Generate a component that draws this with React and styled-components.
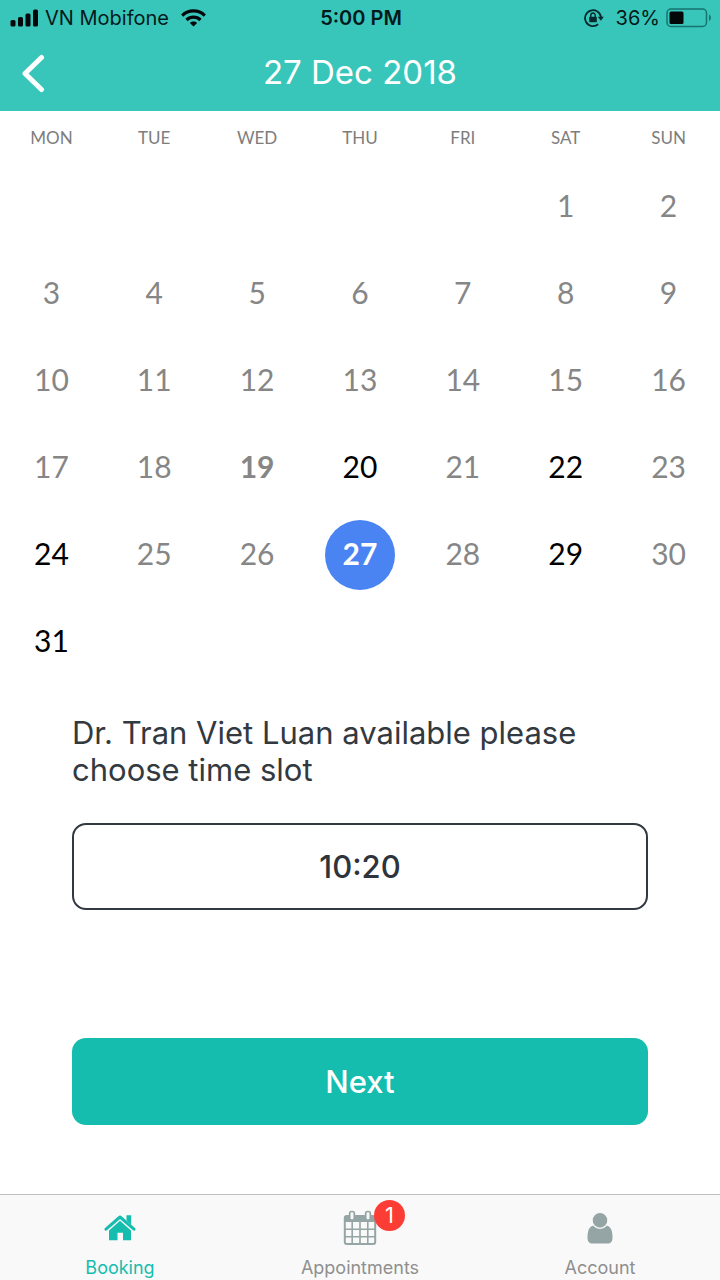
import React, { useState } from "react";
import styled, { createGlobalStyle } from "styled-components";

const GlobalStyle = createGlobalStyle`
  *, *::before, *::after { box-sizing: border-box; }
  body { margin: 0; background: #fff; font-family: Inter, "Liberation Sans", sans-serif; }
  button { font: inherit; margin: 0; padding: 0; border: 0; background: none; cursor: pointer; }
`;

const Screen = styled.div`
  display: flex;
  flex-direction: column;
  min-height: 100vh;
  background: #fff;
`;

const Header = styled.header`
  background: #38c6ba;
`;

const StatusBar = styled.div`
  display: grid;
  grid-template-columns: 1fr auto 1fr;
  align-items: center;
  height: 36px;
  padding: 0 8px 0 10px;
  color: #04191b;
  font-size: 20px;
  line-height: 24px;
`;

const StatusGroup = styled.div`
  display: flex;
  align-items: center;
  justify-content: ${(p) => (p.$end ? "flex-end" : "flex-start")};
  gap: 6px;
  white-space: nowrap;
`;

const Carrier = styled.span`
  margin-right: 6px;
`;

const BatteryLevel = styled.span`
  margin-left: 6px;
`;

const Clock = styled.time`
  font-weight: 600;
`;

const NavBar = styled.div`
  display: grid;
  grid-template-columns: 72px 1fr 72px;
  align-items: center;
  height: 75px;
  padding-bottom: 4px;
  color: #fff;
`;

const BackButton = styled.button`
  display: flex;
  align-items: center;
  height: 64px;
  padding: 4px 0 0 20px;
  color: #fff;
`;

const Title = styled.h1`
  margin: 0;
  text-align: center;
  font-size: 33px;
  line-height: 40px;
  font-weight: 400;
`;

const Main = styled.main`
  flex: 1;
`;

const Calendar = styled.table`
  width: 100%;
  table-layout: fixed;
  border-collapse: collapse;
  font-family: Lato, sans-serif;
`;

const WeekdayCell = styled.th`
  height: 52px;
  padding: 0;
  color: #7d7d7d;
  font-size: 17px;
  font-weight: 400;
`;

const DayCell = styled.td`
  height: 87px;
  padding: 0;
  text-align: center;
`;

const DayButton = styled.button`
  display: block;
  width: 70px;
  height: 70px;
  margin: 0 auto;
  padding-bottom: 4px;
  border-radius: 50%;
  font-size: 30px;
  line-height: 66px;
  color: ${(p) => (p.$selected ? "#fff" : p.$open ? "#000" : "#868686")};
  background: ${(p) => (p.$selected ? "#4a83f2" : "transparent")};
  font-weight: ${(p) => (p.$selected || p.$today ? 700 : 400)};
`;

const Panel = styled.section`
  padding: 29px 10% 69px;
`;

const Prompt = styled.p`
  margin: 0 0 35px;
  color: #333940;
  font-size: 31px;
  line-height: 37px;
`;

const SlotButton = styled.button`
  display: block;
  width: 100%;
  height: 87px;
  border: 2px solid #333940;
  border-radius: 14px;
  color: #2e343b;
  font-size: 31px;
  font-weight: 500;
`;

const NextButton = styled.button`
  display: block;
  width: 100%;
  height: 87px;
  margin-top: 128px;
  border-radius: 14px;
  background: #15bdae;
  color: #fff;
  font-size: 31px;
  font-weight: 500;
`;

const TabBar = styled.nav`
  display: grid;
  grid-template-columns: repeat(3, 1fr);
  border-top: 1px solid #bfbfbf;
  background: #f9f9f9;
`;

const Tab = styled.a`
  display: flex;
  flex-direction: column;
  align-items: center;
  gap: 9px;
  padding-top: 14px;
  color: ${(p) => (p.$active ? "#15bdae" : "#8f8f8f")};
  font-size: 18px;
  line-height: 24px;
  text-decoration: none;
`;

const TabIcon = styled.span`
  position: relative;
  display: flex;
  height: 38px;
  align-items: center;
  color: ${(p) => (p.$active ? "#15bdae" : "#95a5a5")};
`;

const Badge = styled.span`
  position: absolute;
  left: 31px;
  top: -9px;
  width: 31px;
  height: 31px;
  border-radius: 50%;
  background: #fc3d35;
  color: #fff;
  font-size: 22px;
  line-height: 31px;
  text-align: center;
`;

const SignalIcon = () => (
  <svg width="29" height="18" viewBox="0 0 29 18" fill="#04080a" aria-hidden="true">
    <rect x="0.5" y="11" width="5" height="6.5" rx="1.5" />
    <rect x="8" y="8" width="5" height="9.5" rx="1.5" />
    <rect x="15.5" y="4.5" width="5" height="13" rx="1.5" />
    <rect x="23" y="0.5" width="5" height="17" rx="1.5" />
  </svg>
);

const WifiIcon = () => (
  <svg width="25" height="18" viewBox="0 0 25 18" fill="none" stroke="#04080a" strokeWidth="3.2" aria-hidden="true">
    <path d="M1.2 6.6C7.5.4 17.5.4 23.8 6.6" />
    <path d="M5.5 11c4-3.800 10-3.800 14 0" />
    <path d="M12.5 17.5l-3.600-3.600c2-1.900 5.200-1.900 7.200 0z" fill="#04080a" stroke="none" />
  </svg>
);

const RotationLockIcon = () => (
  <svg width="20" height="20" viewBox="0 0 20 20" fill="none" aria-hidden="true">
    <path d="M14.2 16.3A8 8 0 1 1 17 9.2" stroke="#06292c" strokeWidth="1.8" />
    <path d="M13.8 8.800h6L16.9 12.7z" fill="#06292c" />
    <rect x="5.2" y="8.7" width="7.6" height="5.6" rx="0.8" fill="#06292c" />
    <path d="M6.8 9V7.200a2.200 2.200 0 0 1 4.400 0V9" stroke="#06292c" strokeWidth="1.4" />
  </svg>
);

const BatteryIcon = () => (
  <svg width="46" height="20" viewBox="0 0 46 20" fill="none" aria-hidden="true">
    <rect x="1" y="1" width="39.5" height="17.5" rx="4" stroke="#17736f" strokeWidth="1.5" />
    <rect x="3.5" y="3.5" width="14" height="12.5" rx="1.5" fill="#030708" />
    <path d="M43 6.500c2.500 1 2.500 5.500 0 6.500z" fill="#17736f" />
  </svg>
);

const ChevronIcon = () => (
  <svg width="26" height="40" viewBox="0 0 26 40" fill="none" stroke="#fff" strokeWidth="5" strokeLinecap="round" strokeLinejoin="round" aria-hidden="true">
    <path d="M21.500 3.500L5 19.500l16.500 16" />
  </svg>
);

const HomeIcon = () => (
  <svg width="32" height="28" viewBox="0 0 32 28" aria-hidden="true">
    <path d="M2 15.200L16 3l14 12.200" fill="none" stroke="currentColor" strokeWidth="3" strokeLinejoin="round" strokeLinecap="round" />
    <path d="M22.500 1.200h4.700v9.500l-4.700-4.200z" fill="currentColor" />
    <path d="M16 6.800l11 9.600v9.800H19v-7.500h-5.500v7.500H5v-9.800z" fill="currentColor" />
  </svg>
);

const CalendarIcon = () => (
  <svg width="34" height="36" viewBox="0 0 34 36" fill="none" stroke="currentColor" aria-hidden="true">
    <rect x="1.8" y="6" width="30.4" height="28" rx="2" strokeWidth="2" />
    <path d="M1.500 6h31v6h-31z" fill="currentColor" stroke="none" />
    <path d="M9.200 12v22M17 12v22M24.800 12v22M2 19.200h30M2 26.700h30" strokeWidth="1.6" />
    <rect x="6.700" y="1.5" width="4.6" height="8.5" rx="1.8" fill="#f9f9f9" strokeWidth="1.7" />
    <rect x="22.700" y="1.5" width="4.6" height="8.5" rx="1.8" fill="#f9f9f9" strokeWidth="1.7" />
  </svg>
);

const PersonIcon = () => (
  <svg width="26" height="32" viewBox="0 0 26 32" fill="currentColor" aria-hidden="true">
    <path d="M6.500 13.500C2.200 14.200.5 19 .5 25.500c0 4 1.800 6 5 6h15c3.200 0 5-2 5-6 0-6.500-1.700-11.300-6-12z" />
    <circle cx="13" cy="8.400" r="7.900" stroke="#f9f9f9" strokeWidth="1.200" />
  </svg>
);

const WEEKDAYS = ["MON", "TUE", "WED", "THU", "FRI", "SAT", "SUN"];
const OPEN_DAYS = [20, 22, 24, 27, 29, 31];
const FIRST_OFFSET = 5;
const WEEKS = Array.from({ length: 6 }, (_, w) =>
  Array.from({ length: 7 }, (_, d) => {
    const day = w * 7 + d - FIRST_OFFSET + 1;
    return day >= 1 && day <= 31 ? day : null;
  })
);

export default function App() {
  const [selected, setSelected] = useState(27);
  return (
    <Screen>
      <GlobalStyle />
      <Header>
        <StatusBar>
          <StatusGroup>
            <SignalIcon />
            <Carrier>VN Mobifone</Carrier>
            <WifiIcon />
          </StatusGroup>
          <Clock>5:00 PM</Clock>
          <StatusGroup $end>
            <RotationLockIcon />
            <BatteryLevel>36%</BatteryLevel>
            <BatteryIcon />
          </StatusGroup>
        </StatusBar>
        <NavBar>
          <BackButton type="button" aria-label="Back">
            <ChevronIcon />
          </BackButton>
          <Title>{selected} Dec 2018</Title>
        </NavBar>
      </Header>
      <Main>
        <Calendar>
          <thead>
            <tr>
              {WEEKDAYS.map((name) => (
                <WeekdayCell key={name} scope="col">{name}</WeekdayCell>
              ))}
            </tr>
          </thead>
          <tbody>
            {WEEKS.map((week, w) => (
              <tr key={w}>
                {week.map((day, d) => (
                  <DayCell key={d}>
                    {day && (
                      <DayButton
                        type="button"
                        $open={OPEN_DAYS.includes(day)}
                        $today={day === 19}
                        $selected={day === selected}
                        aria-pressed={day === selected}
                        onClick={() => OPEN_DAYS.includes(day) && setSelected(day)}
                      >
                        {day}
                      </DayButton>
                    )}
                  </DayCell>
                ))}
              </tr>
            ))}
          </tbody>
        </Calendar>
        <Panel>
          <Prompt>Dr. Tran Viet Luan available please choose time slot</Prompt>
          <SlotButton type="button">10:20</SlotButton>
          <NextButton type="button">Next</NextButton>
        </Panel>
      </Main>
      <TabBar>
        <Tab href="#booking" $active aria-current="page">
          <TabIcon $active><HomeIcon /></TabIcon>
          Booking
        </Tab>
        <Tab href="#appointments">
          <TabIcon>
            <CalendarIcon />
            <Badge>1</Badge>
          </TabIcon>
          Appointments
        </Tab>
        <Tab href="#account">
          <TabIcon><PersonIcon /></TabIcon>
          Account
        </Tab>
      </TabBar>
    </Screen>
  );
}
